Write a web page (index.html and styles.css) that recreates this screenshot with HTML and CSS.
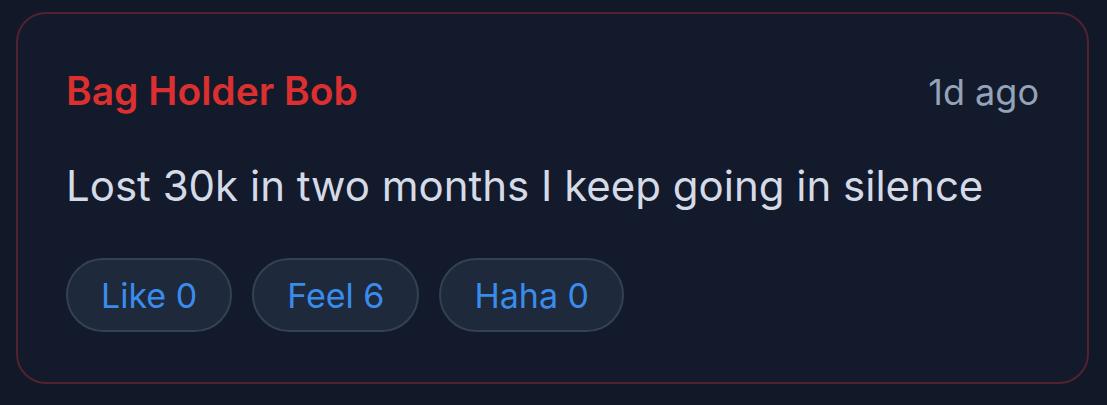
FILE: index.html
```html
<!DOCTYPE html>
<html>
<head>
<meta charset="utf-8">
<link rel="stylesheet" href="styles.css">
</head>
<body>
<div class="card">
  <div class="header">
    <span class="name">Bag Holder Bob</span>
    <span class="time">1d ago</span>
  </div>
  <p class="text">Lost 30k in two months I keep going in silence</p>
  <div class="reactions">
    <button class="react">Like 0</button>
    <button class="react">Feel 6</button>
    <button class="react">Haha 0</button>
  </div>
</div>
</body>
</html>
```
FILE: styles.css
```css
html, body {
  margin: 0;
  padding: 0;
  background: #111827;
}
body {
  padding: 12px 17px 0 16px;
  font-family: Inter, "Noto Sans", sans-serif;
}
.card {
  width: 1073px;
  box-sizing: border-box;
  border: 2px solid #54222f;
  border-radius: 30px;
  background: #131a2b;
  padding: 48px 48px 50px 48px;
}
.header {
  display: flex;
  justify-content: space-between;
  align-items: baseline;
}
.name {
  color: #dc2f2f;
  font-size: 39px;
  font-weight: 600;
  line-height: 58px;
}
.time {
  color: #94a3b8;
  font-size: 36px;
  line-height: 48px;
}
.text {
  margin: 36px 0 42px 0;
  color: #d5dbe6;
  font-size: 42px;
  line-height: 60px;
}
.reactions {
  display: flex;
  gap: 20px;
}
.react {
  height: 74px;
  box-sizing: border-box;
  padding: 0 33px;
  border: 2px solid #334155;
  border-radius: 37px;
  background: #1e293b;
  color: #3a8cec;
  font-family: Inter, "Noto Sans", sans-serif;
  font-size: 34px;
}
```
